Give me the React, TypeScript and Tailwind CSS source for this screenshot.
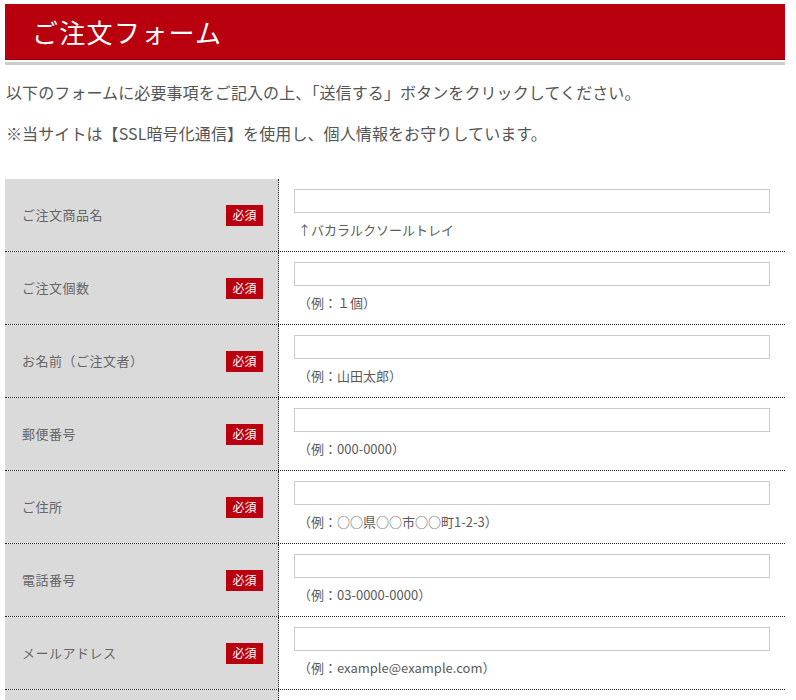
import React from 'react'

const rows = [
  { label: 'ご注文商品名', note: '↑バカラルクソールトレイ' },
  { label: 'ご注文個数', note: '（例：１個）' },
  { label: 'お名前（ご注文者）', note: '（例：山田太郎）' },
  { label: '郵便番号', note: '（例：000-0000）' },
  { label: 'ご住所', note: '（例：○○県○○市○○町1-2-3）' },
  { label: '電話番号', note: '（例：03-0000-0000）' },
  { label: 'メールアドレス', note: '（例：example@example.com）' },
]

export default function App() {
  return (
    <div
      className="min-h-screen bg-white text-[#555]"
      style={{ fontFamily: '"Noto Sans CJK JP", "Noto Sans", sans-serif' }}
    >
      <div className="ml-[5px] w-[780px] pt-[4px]">
        {/* 見出し */}
        <div className="border-b-[3px] border-[#cccccc] pb-[2px]">
          <h1 className="h-[56px] bg-[#b9000e] border-b border-[#98000b] pl-[27px] flex items-center text-[26px] leading-none text-white tracking-[1.3px]">
            ご注文フォーム
          </h1>
        </div>

        <p className="mt-[15px] pl-[1px] text-[16px] leading-[24px] tracking-[0.1px]">
          以下のフォームに必要事項をご記入の上、「送信する」ボタンをクリックしてください。
        </p>
        <p className="mt-[17px] pl-[1px] text-[16px] leading-[24px] tracking-[0.1px]">
          ※当サイトは【SSL暗号化通信】を使用し、個人情報をお守りしています。
        </p>

        {/* フォーム */}
        <div className="mt-[34px]">
          {rows.map((row, i) => (
            <div key={i} className="grid grid-cols-[274px_1fr] border-b border-dotted border-[#222]">
              <div className="bg-[#dadada] border-r border-dotted border-[#222] flex items-center justify-between pl-[17px] pr-[15px]">
                <span className="text-[13px] text-[#666] tracking-[0.5px]">{row.label}</span>
                <span className="bg-[#b9000e] text-white text-[12px] w-[37px] h-[21px] flex items-center justify-center">
                  必須
                </span>
              </div>
              <div className="pl-[15px] pr-[15px] pt-[10px] pb-[12px]">
                <input type="text" className="block w-full h-[24px] border border-[#cccccc] bg-white outline-none" />
                <p className="mt-[8px] pl-[4px] text-[13px] leading-[18px] text-[#5a5a5a]">{row.note}</p>
              </div>
            </div>
          ))}
          {/* 次の行（画面外へ続く） */}
          <div className="grid grid-cols-[274px_1fr] h-[120px]">
            <div className="bg-[#dadada] border-r border-dotted border-[#222]" />
            <div className="pl-[15px] pr-[15px] pt-[10px]">
              <textarea className="block w-full h-[100px] border border-[#cccccc] bg-white outline-none" />
            </div>
          </div>
        </div>
      </div>
    </div>
  )
}
